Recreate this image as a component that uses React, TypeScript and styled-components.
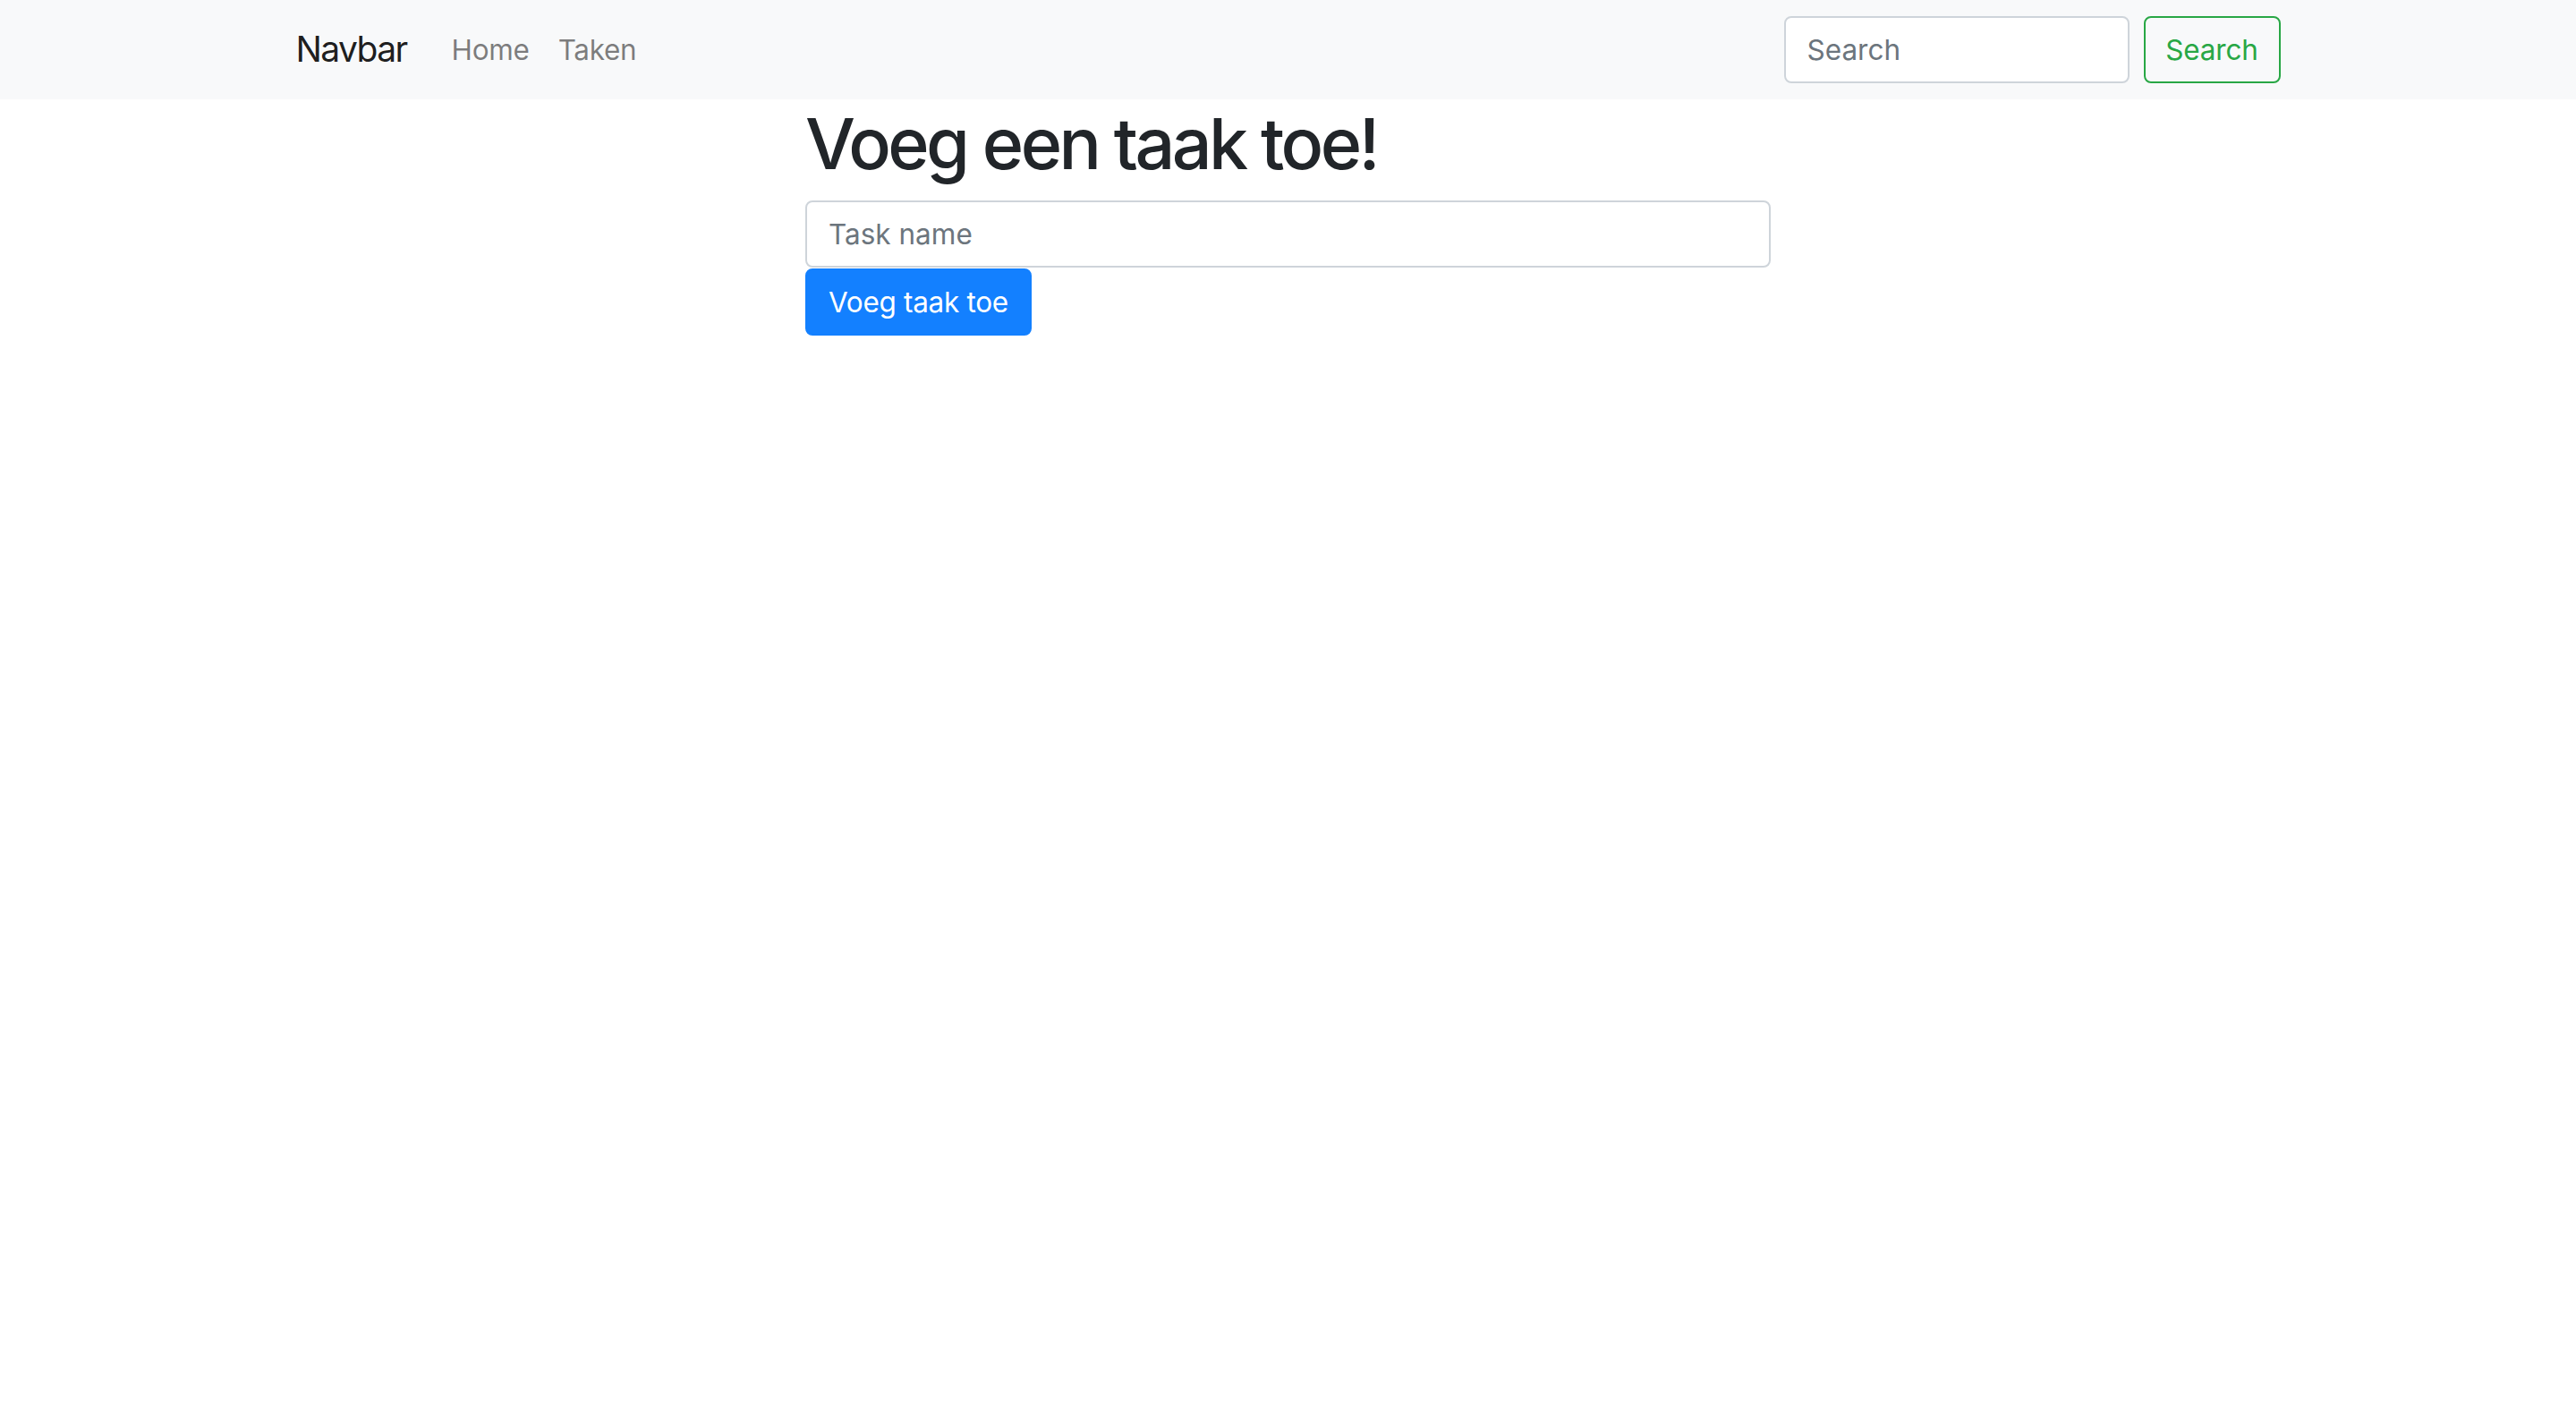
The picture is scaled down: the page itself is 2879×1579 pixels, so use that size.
import React from "react";
import styled, { createGlobalStyle } from "styled-components";

const GlobalStyle = createGlobalStyle`
  html, body {
    margin: 0;
    padding: 0;
    background: #ffffff;
    font-family: Inter, "Noto Sans", "Liberation Sans", sans-serif;
    color: #212529;
  }
  * { box-sizing: border-box; }
`;

const NavBar = styled.nav`
  background: #f8f9fa;
  height: 111px;
`;

const NavInner = styled.div`
  width: 2218px;
  height: 100%;
  margin: 0 auto;
  display: flex;
  align-items: center;
`;

const Brand = styled.a`
  font-size: 39px;
  line-height: 1.5;
  color: rgba(0, 0, 0, 0.9);
  text-decoration: none;
  margin-right: 34px;
  letter-spacing: -1.6px;
`;

const NavLinks = styled.div`
  display: flex;
  align-items: center;
`;

const NavLink = styled.a`
  font-size: 31.5px;
  line-height: 1.5;
  padding: 0 16px;
  color: rgba(0, 0, 0, 0.5);
  text-decoration: none;
  letter-spacing: -0.3px;
`;

const SearchForm = styled.form`
  margin-left: auto;
  display: flex;
  align-items: center;
  gap: 16px;
`;

const SearchInput = styled.input`
  width: 386px;
  height: 75px;
  padding: 0 24px;
  font-family: inherit;
  font-size: 31.5px;
  color: #495057;
  background: #fff;
  border: 2px solid #ced4da;
  border-radius: 8px;
  outline: none;
  &::placeholder { color: #6c757d; opacity: 1; }
`;

const OutlineButton = styled.button`
  width: 153px;
  height: 75px;
  padding: 0;
  font-family: inherit;
  font-size: 31.5px;
  color: #28a745;
  background: transparent;
  border: 2px solid #28a745;
  border-radius: 8px;
  letter-spacing: -0.2px;
`;

const Main = styled.main`
  width: 1079px;
  margin: 0 auto;
`;

const Title = styled.h1`
  margin: 0 0 16px;
  padding-top: 2px;
  font-size: 79px;
  font-weight: 500;
  line-height: 1.2;
  color: #212529;
  letter-spacing: -3.6px;
`;

const TaskInput = styled.input`
  display: block;
  width: 100%;
  height: 75px;
  padding: 0 24px;
  font-family: inherit;
  font-size: 31.5px;
  color: #495057;
  background: #fff;
  border: 2px solid #ced4da;
  border-radius: 8px;
  outline: none;
  &::placeholder { color: #6c757d; opacity: 1; }
`;

const PrimaryButton = styled.button`
  display: block;
  margin-top: 1px;
  height: 75px;
  padding: 0 24px;
  font-family: inherit;
  font-size: 31.5px;
  color: #fff;
  background: #1380ff;
  border: 2px solid #1380ff;
  border-radius: 8px;
  letter-spacing: -0.3px;
`;

export default function App() {
  return (
    <>
      <GlobalStyle />
      <NavBar>
        <NavInner>
          <Brand href="#">Navbar</Brand>
          <NavLinks>
            <NavLink href="#">Home</NavLink>
            <NavLink href="#">Taken</NavLink>
          </NavLinks>
          <SearchForm onSubmit={(e) => e.preventDefault()}>
            <SearchInput type="search" placeholder="Search" aria-label="Search" />
            <OutlineButton type="submit">Search</OutlineButton>
          </SearchForm>
        </NavInner>
      </NavBar>
      <Main>
        <Title>Voeg een taak toe!</Title>
        <TaskInput type="text" placeholder="Task name" />
        <PrimaryButton type="button">Voeg taak toe</PrimaryButton>
      </Main>
    </>
  );
}
